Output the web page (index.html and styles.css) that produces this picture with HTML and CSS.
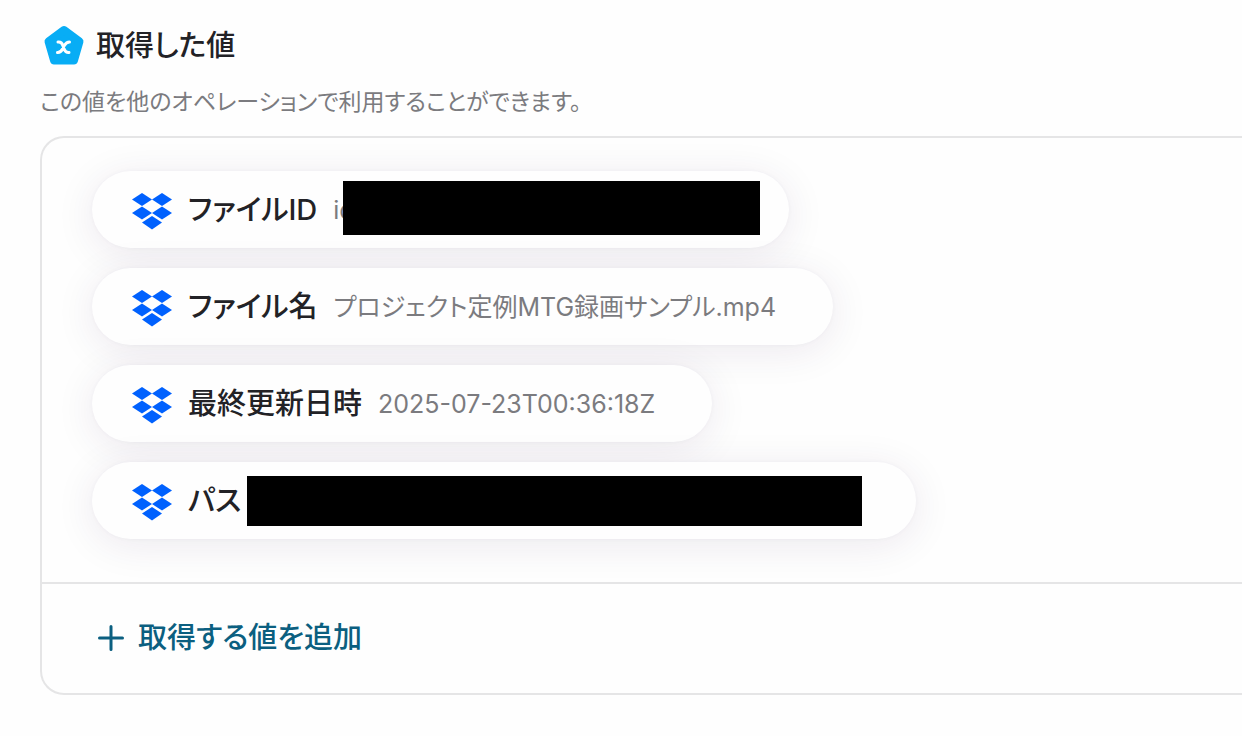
FILE: index.html
```html
<!DOCTYPE html>
<html lang="ja">
<head>
    <meta charset="UTF-8">
    <meta name="viewport" content="width=device-width, initial-scale=1.0">
    <title>取得した値</title>
    <link rel="stylesheet" href="styles.css">
</head>
<body>
    <svg class="sprite" aria-hidden="true">
        <symbol id="dropbox" viewBox="0 0 40 37">
            <path d="M10 0 20 6.5 10 13 0 6.5z"/>
            <path d="M30 0 40 6.5 30 13 20 6.5z"/>
            <path d="M10 13.5 20 20 10 26.5 0 20z"/>
            <path d="M30 13.5 40 20 30 26.5 20 20z"/>
            <path d="M20 23 30 29.5 20 36.5 10 29.5z"/>
        </symbol>
    </svg>
    <main class="output">
        <h2>
            <svg class="logo" viewBox="0 0 48 48" aria-hidden="true">
                <path class="logo-shape" d="M24 8 39.5 19.5 34 38.5H14L8.5 19.5z"/>
                <path class="logo-mark" d="M18 20c3-.3 4 1 4.600 3l1.800 4.500c.8 2 2 3.300 4.600 3M29.500 20c-2.500 0-4 1.500-5.200 3.500l-1.800 3.500c-1.300 2.500-2.500 3.700-5 3.500"/>
            </svg>
            取得した値
        </h2>
        <p class="description">この値を他のオペレーションで利用することができます。</p>
        <section class="panel">
            <ul class="values">
                <li class="pill pill-id">
                    <svg class="icon"><use href="#dropbox"/></svg>
                    <span class="label">ファイルID</span>
                    <span class="value">id</span>
                    <span class="mask"></span>
                </li>
                <li class="pill">
                    <svg class="icon"><use href="#dropbox"/></svg>
                    <span class="label">ファイル名</span>
                    <span class="value">プロジェクト定例MTG録画サンプル.mp4</span>
                </li>
                <li class="pill">
                    <svg class="icon"><use href="#dropbox"/></svg>
                    <span class="label">最終更新日時</span>
                    <span class="value">2025-07-23T00:36:18Z</span>
                </li>
                <li class="pill pill-path">
                    <svg class="icon"><use href="#dropbox"/></svg>
                    <span class="label">パス</span>
                    <span class="mask"></span>
                </li>
            </ul>
            <div class="panel-footer">
                <button class="add" type="button">
                    <svg class="plus" viewBox="0 0 26 26" aria-hidden="true"><path d="M13 1.5v23M1.5 13h23"/></svg>
                    取得する値を追加
                </button>
            </div>
        </section>
    </main>
</body>
</html>
```
FILE: styles.css
```css
* {
    box-sizing: border-box;
}
body {
    font-family: Inter, "Noto Sans CJK JP", sans-serif;
    font-feature-settings: "palt";
    background-color: #fefefe;
    color: #222226;
    margin: 0;
}
.sprite {
    display: none;
}
.output {
    padding: 22px 0 40px 40px;
}
h2 {
    display: flex;
    align-items: center;
    gap: 8px;
    margin: 0;
    font-size: 29px;
    font-weight: 500;
    line-height: 44px;
}
.logo {
    width: 48px;
    height: 48px;
}
.logo-shape {
    fill: #08adf5;
    stroke: #08adf5;
    stroke-width: 8;
    stroke-linejoin: round;
}
.logo-mark {
    fill: none;
    stroke: white;
    stroke-width: 3;
    stroke-linecap: round;
}
.description {
    margin: 16px 0 18px;
    font-size: 23px;
    line-height: 32px;
    color: #7b7b7f;
}
.panel {
    border: 2px solid #e5e5e6;
    border-right: none;
    border-radius: 24px 0 0 24px;
}
.values {
    display: flex;
    flex-direction: column;
    align-items: flex-start;
    gap: 20px;
    margin: 0;
    padding: 33px 50px 43px;
    list-style: none;
}
.pill {
    display: flex;
    align-items: center;
    height: 77px;
    padding: 0 57px 0 40px;
    border-radius: 40px;
    background-color: #fefefe;
    box-shadow: 0 0 4px rgba(60, 20, 80, 0.04), 0 6px 40px rgba(60, 20, 80, 0.09);
    line-height: 36px;
    white-space: nowrap;
}
.icon {
    width: 40px;
    height: 37px;
    margin: 4px 16px 0 0;
    fill: #0061fe;
}
.label {
    margin-right: 16px;
    font-size: 29px;
    font-weight: 500;
}
.value {
    font-size: 25px;
    color: #7b7b7f;
}
.mask {
    background-color: black;
}
.pill-id {
    padding-right: 29px;
}
.pill-id .mask {
    width: 417px;
    height: 54px;
    margin: 0 0 4px -12px;
}
.pill-path {
    padding-right: 54px;
}
.pill-path .label {
    margin-right: 6px;
}
.pill-path .mask {
    width: 615px;
    height: 50px;
}
.panel-footer {
    padding: 32px 56px 33px;
    border-top: 2px solid #e5e5e6;
}
.add {
    display: flex;
    align-items: center;
    gap: 14px;
    padding: 0;
    border: none;
    background: none;
    color: #0b5f80;
    font: inherit;
    font-size: 29px;
    font-weight: 500;
    line-height: 44px;
    cursor: pointer;
}
.plus {
    width: 26px;
    height: 26px;
    fill: none;
    stroke: currentColor;
    stroke-width: 3;
    stroke-linecap: round;
}
```
